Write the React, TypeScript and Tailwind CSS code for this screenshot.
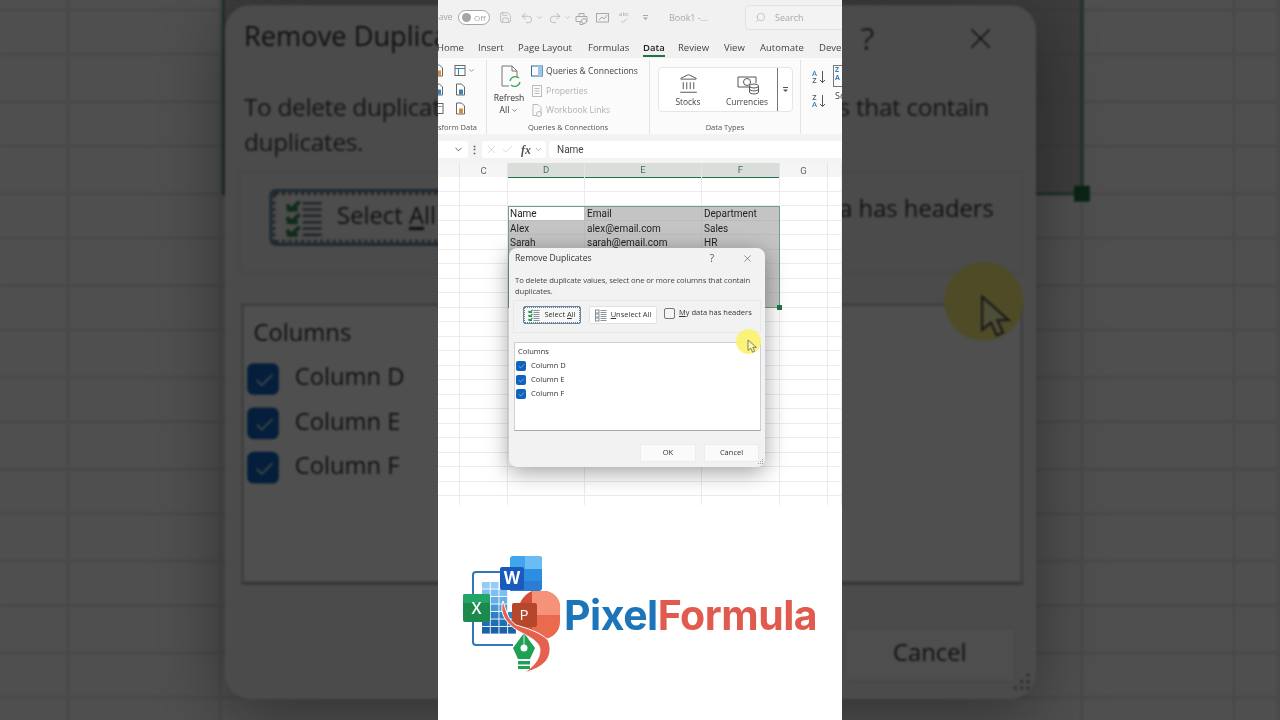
import { Check, ChevronDown, Landmark, Redo2, Save, Search, Undo2, X } from "lucide-react"

const columns = [
	{ name: "", selected: false },
	{ name: "C", selected: false },
	{ name: "D", selected: true },
	{ name: "E", selected: true },
	{ name: "F", selected: true },
	{ name: "G", selected: false },
	{ name: "", selected: false },
]

const cells: Record<number, string[]> = {
	2: ["Name", "Email", "Department"],
	3: ["Alex", "alex@email.com", "Sales"],
	4: ["Sarah", "sarah@email.com", "HR"],
}

const tabs = [
	{ label: "Home", width: "w-[41px]" },
	{ label: "Insert", width: "w-[40px]" },
	{ label: "Page Layout", width: "w-[70px]" },
	{ label: "Formulas", width: "w-[55px]" },
	{ label: "Data", width: "w-[35px]" },
	{ label: "Review", width: "w-[46px]" },
	{ label: "View", width: "w-[36px]" },
	{ label: "Automate", width: "w-[59px]" },
	{ label: "Developer", width: "w-[60px]" },
]

function TitleBar() {
	return (
		<div className="flex h-[35px] shrink-0 items-center overflow-hidden bg-[#f1f1f1] text-[#a8a8a8]">
			<span className="-ml-[4px] w-[24px] shrink-0 text-[8.5px]">Save</span>
			<div className="flex h-[15px] w-[32px] shrink-0 items-center gap-[3px] rounded-full border border-[#a5a5a5] bg-white pl-[3px] text-[8px]">
				<span className="size-[9px] rounded-full bg-[#a5a5a5]" />
				Off
			</div>
			<Save size={13} strokeWidth={1.2} className="ml-[9px] shrink-0" />
			<Undo2 size={14} strokeWidth={1.2} className="ml-[8px] shrink-0" />
			<ChevronDown size={7} className="ml-[2px] shrink-0" />
			<Redo2 size={14} strokeWidth={1.2} className="ml-[5px] shrink-0" />
			<ChevronDown size={7} className="ml-[2px] shrink-0" />
			<svg width="13" height="14" viewBox="0 0 13 14" fill="none" stroke="currentColor" className="ml-[4px] shrink-0">
				<path d="M1 5.500h11v5H1zM4 5.500V2.500h5v3M5 10.500v3h3v-3" />
				<circle cx="9" cy="10" r="2.500" fill="#f1f1f1" />
			</svg>
			<svg width="13" height="11" viewBox="0 0 13 11" fill="none" stroke="currentColor" className="ml-[8px] shrink-0">
				<rect x="0.500" y="1.500" width="12" height="8.500" />
				<path d="M3 8l3-3 2 2 3-4" />
			</svg>
			<div className="ml-[9px] flex w-[12px] shrink-0 flex-col items-center text-[6px] leading-[6px]">
				abc
				<Check size={8} />
			</div>
			<svg width="7" height="7" viewBox="0 0 7 7" className="ml-[12px] shrink-0 fill-current">
				<path d="M1 1h5v1H1zM1 3.500h5L3.500 6z" />
			</svg>
			<span className="ml-[20px] w-[76px] shrink-0 text-[9px]">Book1 -...</span>
			<div className="flex h-[25px] w-[110px] shrink-0 items-center gap-[9px] rounded-[4px] border border-[#e2e2e2] bg-[#f3f3f3] pl-[9px] text-[9px]">
				<Search size={11} strokeWidth={1.3} className="scale-x-[-1]" />
				Search
			</div>
		</div>
	)
}

function Tabs() {
	return (
		<div className="flex h-[23px] shrink-0 items-center overflow-hidden bg-[#f1f1f1] pt-[3px] text-[9.5px] text-[#444]">
			<div className="-ml-[1px] flex shrink-0">
				{tabs.map((tab) => (
					<div key={tab.label} className={`${tab.width} shrink-0`}>
						<span className={tab.label === "Data" ? "border-b-2 border-[#217346] pb-[1px] font-semibold text-[#222]" : ""}>{tab.label}</span>
					</div>
				))}
			</div>
		</div>
	)
}

function RibbonGroup({ width, label, labelClass = "justify-center", children }: { width: string; label: string; labelClass?: string; children: React.ReactNode }) {
	return (
		<div className={`${width} flex shrink-0 flex-col`}>
			<div className="h-[61px] overflow-hidden border-r border-[#e3e3e3]">{children}</div>
			<div className={`flex h-[13px] items-center overflow-hidden border-r border-[#e3e3e3] text-[7.500px] whitespace-nowrap text-[#555] ${labelClass}`}>{label}</div>
		</div>
	)
}

function SmallSheetIcon({ accent = "#3b82b8" }: { accent?: string }) {
	return (
		<svg width="13" height="13" viewBox="0 0 13 13" fill="none" stroke="#666" className="shrink-0">
			<rect x="1" y="1.500" width="10" height="10" fill="#fff" />
			<path d="M1 4.500h10M4.500 4.500v7" stroke={accent} />
		</svg>
	)
}

function SmallFileIcon({ accent = "#d98b3a" }: { accent?: string }) {
	return (
		<svg width="13" height="13" viewBox="0 0 13 13" fill="none" stroke="#666" className="shrink-0">
			<path d="M2.500 1h5l3 3v8h-8z" fill="#fff" />
			<rect x="5" y="6.500" width="4" height="5" fill={accent} stroke="none" />
		</svg>
	)
}

function Ribbon() {
	return (
		<div className="flex h-[76px] shrink-0 overflow-hidden bg-[#fbfbfb] pt-[2px] shadow-[0_2px_3px_rgba(0,0,0,0.15)]">
			<RibbonGroup width="w-[49px]" label="Transform Data" labelClass="justify-end pr-[9px]">
				<div className="-ml-[6px] grid w-[40px] grid-cols-[22px_18px] gap-y-[6px] pt-[4px]">
					<SmallFileIcon />
					<div className="flex items-center"><SmallSheetIcon /><ChevronDown size={7} className="ml-[1px] shrink-0 text-[#555]" /></div>
					<SmallFileIcon accent="#3b82b8" />
					<SmallFileIcon accent="#3b82b8" />
					<SmallSheetIcon accent="#999" />
					<SmallFileIcon />
				</div>
			</RibbonGroup>
			<RibbonGroup width="w-[163px]" label="Queries & Connections">
				<div className="flex">
					<div className="flex w-[44px] shrink-0 flex-col items-center pt-[4px] text-[8.6px] leading-[12px] text-[#333]">
						<svg width="22" height="26" viewBox="0 0 22 26" fill="none" className="ml-[4px]">
							<path d="M2 2h10l5 5v7M2 2v20h7M5 1" stroke="#777" />
							<path d="M12 2v5h5" stroke="#777" />
							<path d="M10 17a5.500 5.500 0 0 1 9-3M20 18a5.500 5.500 0 0 1-9 3" stroke="#3aa655" strokeWidth="1.300" />
						</svg>
						<span className="mt-[2px]">Refresh</span>
						<span className="flex items-center gap-[2px]">All <ChevronDown size={7} /></span>
					</div>
					<div className="flex flex-col gap-[5.500px] pt-[4px] text-[8.6px] leading-[14px] text-[#444]">
						<div className="flex items-center gap-[3px]">
							<svg width="12" height="12" viewBox="0 0 12 12" fill="none" className="shrink-0">
								<rect x="0.500" y="1" width="11" height="10" stroke="#2f6f9f" />
								<rect x="7" y="1" width="4.500" height="10" fill="#9cc6e4" />
							</svg>
							Queries &amp; Connections
						</div>
						<div className="flex items-center gap-[3px] text-[#b0b0b0]">
							<svg width="12" height="12" viewBox="0 0 12 12" fill="none" stroke="#bbb" className="shrink-0">
								<rect x="1.500" y="0.500" width="9" height="11" />
								<path d="M3.500 3.500h5M3.500 6h5M3.500 8.500h5" />
							</svg>
							Properties
						</div>
						<div className="flex items-center gap-[3px] text-[#b0b0b0]">
							<svg width="12" height="13" viewBox="0 0 12 13" fill="none" stroke="#bbb" className="shrink-0">
								<path d="M2 .500h5l3 3v6M2 .500v11h4" />
								<circle cx="8" cy="10" r="2.500" />
							</svg>
							Workbook Links
						</div>
					</div>
				</div>
			</RibbonGroup>
			<RibbonGroup width="w-[151px]" label="Data Types">
				<div className="ml-[8px] mt-[7px] flex h-[45px] w-[135px] overflow-hidden rounded-[4px] border border-[#e6e6e6] bg-white text-[8.4px] text-[#444]">
					<div className="flex w-[118px] shrink-0">
						<div className="flex w-[58px] flex-col items-center pt-[5px]">
							<Landmark size={21} strokeWidth={1} className="text-[#444]" />
							<span className="mt-[2px]">Stocks</span>
						</div>
						<div className="flex w-[60px] flex-col items-center pt-[7px]">
							<svg width="24" height="20" viewBox="0 0 24 20" fill="none" stroke="#555" className="ml-[2px]">
								<path d="M15 12H2V2h18v6" />
								<circle cx="11" cy="7" r="3.500" />
								<ellipse cx="18" cy="11" rx="4.500" ry="2" fill="#fff" />
								<path d="M13.500 11v6c0 2.500 9 2.500 9 0v-6M13.500 14c0 2.500 9 2.500 9 0" />
							</svg>
							<span className="mt-[1px]">Currencies</span>
						</div>
					</div>
					<div className="flex flex-1 items-center justify-center border-l border-[#777] text-[#555]">
						<svg width="7" height="7" viewBox="0 0 7 7" className="fill-current">
							<path d="M1 1h5v1H1zM1 3.500h5L3.500 6z" />
						</svg>
					</div>
				</div>
			</RibbonGroup>
			<div className="flex flex-1 flex-col overflow-hidden pl-[10px] pt-[10px]">
				<div className="flex gap-[7px]">
					<div className="flex w-[15px] shrink-0 flex-col gap-[10px]">
						<SortIcon top="A" bottom="Z" />
						<SortIcon top="Z" bottom="A" />
					</div>
					<div className="-mt-[5px] flex w-[20px] flex-col text-[9px] text-[#444]">
						<div className="flex h-[22px] w-[20px] flex-col border border-[#777] pl-[1px] text-[7px] leading-[8px] font-bold text-[#2f7fc1]">
							<span>Z</span>
							<span>A</span>
						</div>
						<span className="mt-[2px] ml-[2px]">Sort</span>
					</div>
				</div>
			</div>
		</div>
	)
}

function SortIcon({ top, bottom }: { top: string; bottom: string }) {
	return (
		<div className="flex items-center gap-[1px]">
			<div className="flex w-[7px] flex-col items-center text-[7.500px] leading-[7px] font-semibold">
				<span className={top === "A" ? "text-[#2f7fc1]" : "text-[#555]"}>{top}</span>
				<span className={top === "A" ? "text-[#555]" : "text-[#2f7fc1]"}>{bottom}</span>
			</div>
			<svg width="7" height="14" viewBox="0 0 7 14" fill="none" stroke="#555">
				<path d="M3.500 1v11.500M1 10l2.500 2.500L6 10" />
			</svg>
		</div>
	)
}

function FormulaBar() {
	return (
		<div className="flex h-[29px] shrink-0 items-center bg-[#f3f3f3] pt-[2px] text-[#999]">
			<div className="flex h-[17px] w-[30px] shrink-0 items-center justify-end rounded-r-[3px] bg-white pr-[4px] text-[#555]">
				<ChevronDown size={11} />
			</div>
			<span className="ml-[1px] w-[13px] text-[11px] leading-none font-bold text-[#555]">⋮</span>
			<div className="flex h-[17px] w-[64px] shrink-0 items-center gap-[3px] rounded-[3px] bg-white pl-[3px]">
				<X size={13} strokeWidth={1} className="text-[#bbb]" />
				<Check size={13} strokeWidth={1} className="text-[#bbb]" />
				<span className="ml-[4px] font-['Liberation_Serif',serif] text-[12px] font-bold text-[#555] italic">fx</span>
				<ChevronDown size={9} />
			</div>
			<div className="ml-[3px] flex h-[17px] flex-1 items-center rounded-l-[3px] bg-white pl-[8px] font-['Roboto',sans-serif] text-[10px] text-[#444]">
				Name
			</div>
		</div>
	)
}

function ListIcon({ checks }: { checks: boolean }) {
	const ys = [2, 6, 10]
	return (
		<svg width="12" height="13" viewBox="0 0 12 13" fill="none" className="shrink-0">
			{ys.map((y) =>
				checks ? (
					<path key={y} d={`M0.500 ${y}l1.500 1.500 2.500-2.500M0.500 ${y + 1.500}h3.500`} stroke="#2e8b4f" strokeWidth="1.200" />
				) : (
					<rect key={y} x="0.500" y={y - 1} width="3.500" height="3" stroke="#6a7680" strokeWidth="0.800" />
				)
			)}
			<path d="M5.500 1.500h6M5.500 3.500h6M5.500 5.500h6M5.500 7.500h6M5.500 9.500h6M5.500 11.500h6" stroke="#6a7680" strokeWidth="0.800" />
		</svg>
	)
}

function BlueCheck({ label }: { label: string }) {
	return (
		<div className="flex h-[14px] items-center gap-[5px] text-[7.500px] text-[#333]">
			<div className="flex size-[10px] items-center justify-center rounded-[2px] bg-[#0f62bd] text-white">
				<Check size={7} strokeWidth={1.500} />
			</div>
			{label}
		</div>
	)
}

function Dialog() {
	return (
		<div className="absolute top-[85px] left-[71px] flex h-[219px] w-[256px] flex-col rounded-[8px] bg-[#f2f2f2] px-[4px] text-[#333] shadow-[0_5px_22px_rgba(0,0,0,0.38)]">
			<div className="flex h-[21px] shrink-0 items-center pl-[2px] text-[8.6px] text-[#333]">
				<span className="flex-1">Remove Duplicates</span>
				<span className="mr-[28px] text-[10px] text-[#555]">?</span>
				<X size={11} strokeWidth={1} className="mr-[8px] text-[#222]" />
			</div>
			<p className="mt-[6px] h-[24px] shrink-0 pl-[2px] text-[7.7px] leading-[10.500px] tracking-[-0.1px] text-[#444]">
				To delete duplicate values, select one or more columns that contain duplicates.
			</p>
			<div className="mt-[1px] flex h-[33px] shrink-0 items-start gap-[8px] border border-[#e8e8e8] pt-[5px] pl-[9px] text-[7.500px]">
				<div className="flex h-[18px] w-[58px] items-center justify-center gap-[4px] rounded-[2px] border-[1.5px] border-[#5d88ad] bg-[#f7f7f7] outline-[0.5px] -outline-offset-[2.5px] outline-[#777] outline-dotted">
					<ListIcon checks />
					<span>
						Select <u>A</u>ll
					</span>
				</div>
				<div className="flex h-[18px] w-[68px] items-center justify-center gap-[4px] rounded-[2px] border border-[#e2e2e2] bg-white">
					<ListIcon checks={false} />
					<span>
						<u>U</u>nselect All
					</span>
				</div>
				<div className="-mt-[2px] ml-[-1px] flex h-[18px] items-center gap-[4px]">
					<span className="size-[11px] rounded-[2px] border border-[#777] bg-[#f4f4f4]" />
					<span>
						<u>M</u>y data has headers
					</span>
				</div>
			</div>
			<div className="mt-[9px] ml-[1px] h-[89px] w-[247px] shrink-0 border border-[#cfcfcf] border-b-[#aaa] bg-white pt-[3px] pl-[1px]">
				<div className="mb-[1px] h-[12px] pl-[2px] text-[7.500px]">Columns</div>
				<BlueCheck label="Column D" />
				<BlueCheck label="Column E" />
				<BlueCheck label="Column F" />
			</div>
			<div className="mt-[13px] flex justify-end gap-[8px] pr-[2px] text-[7.500px]">
				<div className="flex h-[18px] w-[56px] items-center justify-center rounded-[2px] border border-[#ececec] bg-[#fafafa]">OK</div>
				<div className="flex h-[18px] w-[55px] items-center justify-center rounded-[2px] border border-[#ececec] bg-[#fafafa]">Cancel</div>
			</div>
			<svg width="8" height="8" viewBox="0 0 8 8" className="absolute right-[1px] bottom-[1px] fill-[#999]">
				<path d="M6 1h1v1H6zM4 3h1v1H4zM6 3h1v1H6zM2 5h1v1H2zM4 5h1v1H4zM6 5h1v1H6z" />
			</svg>
		</div>
	)
}

function Sheet() {
	return (
		<div className="relative h-[342px] shrink-0 overflow-hidden bg-white font-['Roboto',sans-serif]">
			<div className="grid h-[14px] grid-cols-[22px_48px_77px_117px_78px_48px_14px] bg-[#f5f5f5] text-[9.500px] text-[#666]">
				{columns.map((col, i) => (
					<div
						key={i}
						className={`flex items-center justify-center border-r border-[#e4e4e4] ${col.selected ? "border-b-[1.500px] border-b-[#217346] bg-[#d9dedb] text-[#4a6b58]" : ""}`}
					>
						{col.name}
					</div>
				))}
			</div>
			{Array.from({ length: 23 }, (_, row) => (
				<div key={row} className="grid h-[14.500px] grid-cols-[22px_48px_77px_117px_78px_48px_14px] text-[10px] leading-[15.5px] text-[#1f1f1f]">
					{columns.map((_, col) => {
						const inTable = row >= 2 && row <= 8 && col >= 2 && col <= 4
						const active = row === 2 && col === 2
						return (
							<div
								key={col}
								className={`truncate border-r border-b pl-[2px] ${inTable ? "border-[#bcbcbc]" : "border-[#ebebeb]"} ${inTable && !active ? "bg-[#c4c4c4]" : ""}`}
							>
								{inTable ? cells[row]?.[col - 2] : ""}
							</div>
						)
					})}
				</div>
			))}
			<div className="absolute top-[43px] left-[70px] h-[102px] w-[272px] border border-[#6f9f85]">
				<div className="absolute -right-[3px] -bottom-[3px] size-[5px] bg-[#217346]" />
			</div>
			<div className="font-['Open_Sans',sans-serif]">
				<Dialog />
			</div>
			<div className="absolute top-[166px] left-[298px] size-[25px] rounded-full bg-[#fbf26c]/90" />
			<svg width="13" height="15" viewBox="0 0 13 15" className="absolute top-[176px] left-[309px]">
				<path d="M1 1v10.500l2.800-2.300 1.800 4 2-.9-1.800-3.900h3.600z" fill="#fff" fillOpacity="0.4" stroke="#555" strokeWidth="0.700" />
			</svg>
		</div>
	)
}

const tileRows = [
	{ y: 32, cols: 2, shade: "#93ccf7" },
	{ y: 39.5, cols: 3, shade: "#7fbef0" },
	{ y: 47, cols: 3, shade: "#66aee6" },
	{ y: 54.5, cols: 3, shade: "#4a97d6" },
	{ y: 62, cols: 4, shade: "#2f7fc4" },
	{ y: 69.5, cols: 4, shade: "#1f6fb6" },
	{ y: 77, cols: 4, shade: "#1a62a8" },
]

function LogoMark() {
	return (
		<svg width="110" height="125" viewBox="0 0 110 125" className="shrink-0">
			<path d="M42 22H16a3 3 0 0 0-3 3v67a3 3 0 0 0 3 3h37" fill="none" stroke="#2f78b9" strokeWidth="2" />
			{tileRows.map((row) =>
				Array.from({ length: row.cols }, (_, col) => (
					<rect key={`${row.y}-${col}`} x={22 + col * 8.7} y={row.y} width="7.800" height="6.600" fill={row.shade} />
				))
			)}
			<path d="M50 9a3 3 0 0 1 3-3h26a3 3 0 0 1 3 3v10H50z" fill="#41a5ee" />
			<path d="M65 6h14a3 3 0 0 1 3 3v10H65z" fill="#6bbcf5" />
			<rect x="50" y="19" width="32" height="12" fill="#2b8ee0" />
			<path d="M50 31h32v7a3 3 0 0 1-3 3H50z" fill="#2b7cd3" />
			<rect x="40" y="17" width="24" height="23" rx="2" fill="#185abd" />
			<text x="52" y="34" textAnchor="middle" fontSize="17" fontWeight="700" fill="#fff" fontFamily="Open Sans, sans-serif">W</text>
			<rect x="3" y="44" width="27" height="28" rx="2" fill="#1c8a4c" />
			<rect x="3" y="44" width="27" height="9" rx="2" fill="#23a566" />
			<text x="16.500" y="64" textAnchor="middle" fontSize="16" fontWeight="600" fill="#fff" fontFamily="Open Sans, sans-serif">X</text>
			<path d="M72 41h12a16 16 0 0 1 16 16v15a17 17 0 0 1-17 17H72z" fill="#ea6a4e" />
			<path d="M72 41h12a16 16 0 0 1 16 16v8H72z" fill="#f6917a" />
			<path d="M72 41v48a24 24 0 0 1-14-24 24 24 0 0 1 14-24z" fill="#d24e37" />
			<rect x="52" y="53" width="25" height="24" rx="2" fill="#b7472a" />
			<text x="64" y="70" textAnchor="middle" fontSize="15" fill="#fff" fontFamily="Open Sans, sans-serif">P</text>
			<path d="M43 51C46 60 48 70 56 75C66 78 80 82 88 90C92 98 90 108 84 113C78 119 70 121 63 123C72 118 80 110 80 100C80 93 72 88 62 83C50 77 38 66 43 51z" fill="#e4604f" stroke="#fff" strokeWidth="1" />
			<path d="M64 83l11 15-5 11H58l-5-11z" fill="#1fa154" />
			<circle cx="64" cy="98" r="3.500" fill="#fff" />
			<path d="M64 83v12" stroke="#fff" strokeWidth="0.800" />
			<rect x="58" y="111" width="12" height="3.500" fill="#1fa154" />
			<rect x="58" y="116" width="12" height="3" fill="#1fa154" />
		</svg>
	)
}

function Logo() {
	return (
		<div className="flex flex-1 bg-white pt-[45px] pl-[22px]">
			<LogoMark />
			<div className="-ml-[6px] mt-[44px] flex h-[44px] items-center font-['Inter',sans-serif] text-[41px] font-bold tracking-[-0.5px]">
				<span className="text-[#1d75b9]">Pixel</span>
				<span className="text-[#e05a4e]">Formula</span>
			</div>
		</div>
	)
}

function Strip({ className = "" }: { className?: string }) {
	return (
		<div className={`flex h-[720px] w-[404px] shrink-0 flex-col overflow-hidden bg-white font-['Open_Sans',sans-serif] ${className}`}>
			<TitleBar />
			<Tabs />
			<Ribbon />
			<FormulaBar />
			<Sheet />
			<Logo />
		</div>
	)
}

export default function App() {
	return (
		<div className="relative flex h-[720px] w-[1280px] justify-center overflow-hidden bg-[#4f4f4f]">
			{/* the video's blurred backdrop is the same frame, enlarged and dimmed */}
			<div aria-hidden className="absolute inset-0 flex justify-center">
				<Strip className="scale-[3.168] blur-[0.35px] brightness-[0.31]" />
			</div>
			<Strip className="relative blur-[0.2px]" />
		</div>
	)
}
